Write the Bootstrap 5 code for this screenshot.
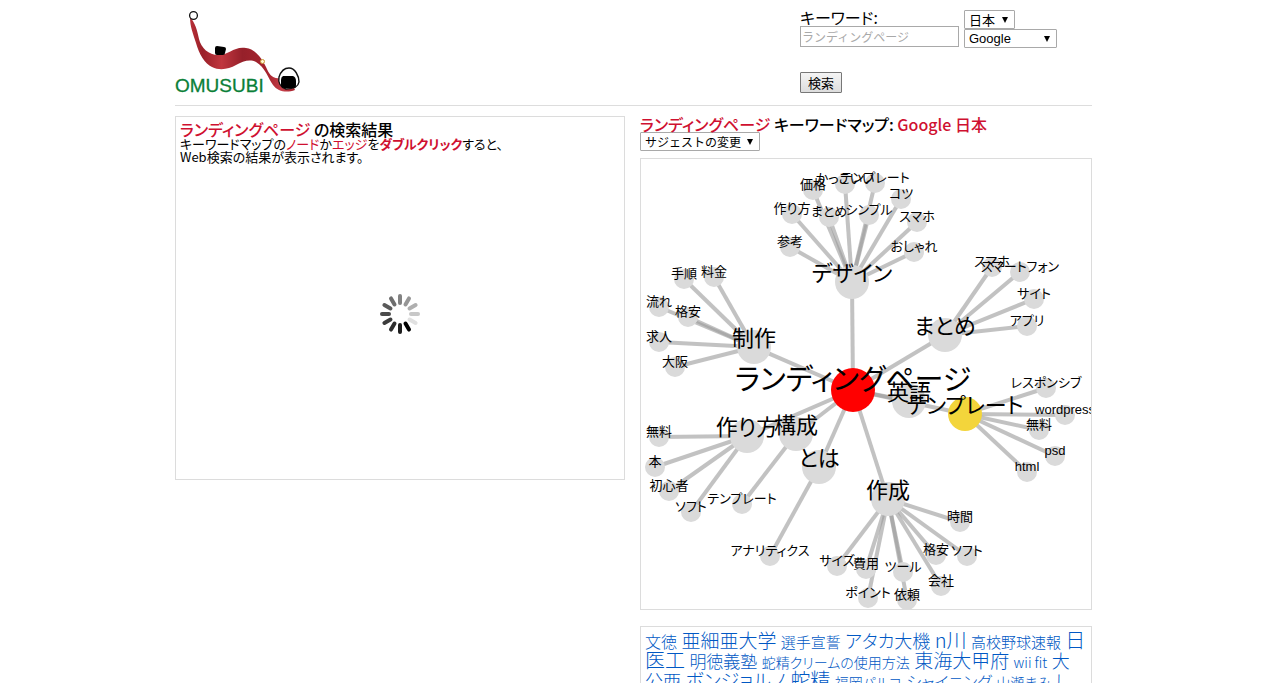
<!DOCTYPE html>
<html lang="ja">
<head>
<meta charset="utf-8">
<meta name="viewport" content="width=device-width, initial-scale=1">
<title>ランディングページ - OMUSUBI</title>
<link href="https://cdn.jsdelivr.net/npm/bootstrap@5.3.0/dist/css/bootstrap.min.css" rel="stylesheet">
<style>
body{font-family:"Noto Sans CJK JP",sans-serif;font-feature-settings:"palt";color:#000;background:#fff;font-size:13px;line-height:13px}
.page{max-width:920px;padding-left:3px}
.topbar{height:105px;padding-top:9px}
.logo{width:130px;height:90px}
.search{width:292px;gap:5px}
.kw-label{font-size:16px;line-height:17px}
.kw-input{width:159px;height:21px;border:1px solid #a9a9a9;padding:0 1px;font-size:12px;line-height:19px}
.kw-input::placeholder{color:#a9a9a9;opacity:1}
.picks{padding-top:1px}
.pick{appearance:none;height:19px;border:1px solid #a9a9a9;border-radius:1px;color:#000;padding:0 4px;font-size:13px;line-height:16px;
 background:#fff url("data:image/svg+xml,%3Csvg xmlns='http://www.w3.org/2000/svg' width='6' height='6'%3E%3Cpath d='M0 0h6L3 6z'/%3E%3C/svg%3E") no-repeat right 6px center}
.pick-area{width:51px}
.pick-engine{width:93px;font-family:"Liberation Sans",sans-serif}
.pick-suggest{width:120px;font-size:12px}
.go{width:42px;height:21px;margin-top:25px;padding:0;border:1px solid #777;border-radius:1px;background:linear-gradient(#f4f4f4,#ddd);color:#000;font-size:13px;line-height:17px}
.rule{border-top:1px solid #ddd}
.cols{display:grid;grid-template-columns:450fr 452fr;gap:15px;padding-top:10px}
.panel{border:1px solid #dcdcdc}
.result{min-height:364px;padding:4px}
.wait{padding-bottom:10px}
.ttl{font-size:16px;line-height:16px;margin:0;font-weight:500;color:#000}
.red{color:#cf1030}
.mapbox{margin-top:7px}
.map{display:block;width:100%;aspect-ratio:1;font-family:"Liberation Sans","Noto Sans CJK JP",sans-serif}
.map text{text-anchor:middle;dominant-baseline:central;fill:#000}
.map line{stroke:#999;stroke-opacity:.6;stroke-width:4}
.cloud{padding:5px 5px 5px 4px;font-size:15px;line-height:20px}
.cloud a{color:#0058c4;text-decoration:none;font-weight:300;line-height:0;margin-right:1px}
.cloud .s14{font-size:14px}.cloud .s16{font-size:16px}.cloud .s17{font-size:17px}.cloud .s18{font-size:18px}.cloud .s19{font-size:19px}.cloud .s20{font-size:20px}
@media(max-width:767px){.cols{grid-template-columns:1fr}}
</style>
</head>
<body>
<div class="page mx-auto">
<header class="topbar d-flex justify-content-between">
 <a href="#" aria-label="OMUSUBI"><svg class="logo" viewBox="175 9 130 90">
  <defs><linearGradient id="cloth" x1="0" x2="1"><stop offset="0" stop-color="#b83038"/><stop offset=".12" stop-color="#9a2029"/><stop offset=".3" stop-color="#c0373f"/><stop offset=".5" stop-color="#96202a"/><stop offset=".75" stop-color="#a8252f"/><stop offset=".88" stop-color="#c5404a"/><stop offset="1" stop-color="#a51f29"/></linearGradient></defs>
  <path d="M190 17C190 27 193 33 196 43C199 54 205 64 212 67C220 71 229 69 236 65C243 61 250 59 256 62C265 67 268 78 273 85C278 92 287 93 295 90L293 86L280 78C272 79 269 74 266 67C262 58 255 49 246 48C234 46 229 55 218 55C209 55 201 48 199 39C197 29 195 23 190 17Z" fill="url(#cloth)"/>
  <circle cx="193.500" cy="15.500" r="3.900" fill="#fff" stroke="#111" stroke-width="1.300"/>
  <path d="M217 46l7 1q2 0 2 2l-1 4q0 2-2 2h-6q-2 0-2-2v-5q0-2 2-2Z"/>
  <circle cx="262.500" cy="61.500" r="2" fill="#fff8d0" stroke="#c99a3a"/>
  <path d="M289 68C295 68 299 76 299 82C298 88 292 89 286 89C280 87 278 82 279 77C281 71 285 68 289 68Z" fill="#fff" stroke="#111" stroke-width="1.400"/>
  <path d="M283 76h10q3 1 3 5v4q0 3-3 3h-9q-3 0-3-3v-5q0-3 2-4Z"/>
  <text x="175" y="92" font-family="Liberation Sans, sans-serif" font-size="19" fill="#0b8038" stroke="#0b8038" stroke-width=".3">OMUSUBI</text>
 </svg></a>
 <form class="search d-flex align-items-start" onsubmit="return false">
  <div class="d-flex flex-column align-items-start">
   <label class="kw-label" for="kw">キーワード:</label>
   <input class="kw-input" id="kw" type="text" placeholder="ランディングページ">
   <button class="go" type="submit">検索</button>
  </div>
  <div class="picks d-flex flex-column align-items-start">
   <select class="pick pick-area" aria-label="地域"><option>日本</option></select>
   <select class="pick pick-engine" aria-label="検索エンジン"><option>Google</option></select>
  </div>
 </form>
</header>
<div class="rule"></div>
<main class="cols align-items-start">
 <section class="panel result d-flex flex-column">
  <h1 class="ttl"><span class="red">ランディングページ</span> の検索結果</h1>
  <p class="m-0">キーワードマップの<span class="red">ノード</span>か<span class="red">エッジ</span>を<b class="red">ダブルクリック</b>すると、<br>Web検索の結果が表示されます。</p>
  <div class="wait flex-grow-1 d-flex justify-content-center align-items-center"><svg id="spin" width="42" height="42" viewBox="-21 -21 42 42" role="img" aria-label="読み込み中"></svg></div>
 </section>
 <section>
  <h2 class="ttl"><span class="red">ランディングページ</span> キーワードマップ: <span class="red">Google 日本</span></h2>
  <select class="pick pick-suggest d-block" aria-label="サジェスト"><option>サジェストの変更</option></select>
  <div class="panel mapbox"><svg id="map" class="map" viewBox="0 0 450 450"></svg></div>
  <div class="panel cloud mt-3">
   <a class="s16" href="#">文徳</a> <a class="s19" href="#">亜細亜大学</a> <a href="#">選手宣誓</a> <a class="s18" href="#">アタカ大機</a> <a class="s20" href="#">n川</a> <a href="#">高校野球速報</a> <a class="s20" href="#">日医工</a> <a class="s17" href="#">明徳義塾</a> <a class="s14" href="#">蛇精クリームの使用方法</a> <a class="s19" href="#">東海大甲府</a> <a class="s14" href="#">wii fit</a> <a class="s18" href="#">大公西</a> <a class="s19" href="#">ボンジョルノ</a> <a class="s20" href="#">蛇精</a> <a class="s14" href="#">福岡パルコ</a> <a class="s16" href="#">シャイニング</a> <a class="s14" href="#">山瀬まみ</a> <a class="s17" href="#">しい</a>
  </div>
 </section>
</main>
</div>
<script src="https://cdn.jsdelivr.net/npm/bootstrap@5.3.0/dist/js/bootstrap.bundle.min.js"></script>
<script>
// Each hub: label, x, y, then its suggestions as [label, x, y].
const root = ['ランディングページ', 212, 231];
const hubs = [
 ['デザイン',211,123,[['かっこいい',204,25],['テンプレート',234,24],['価格',172,31],['コツ',260,40],['作り方',151,55],['まとめ',188,58],['シンプル',228,56],['スマホ',276,63],['おしゃれ',273,93],['参考',149,88]]],
 ['まとめ',304,176,[['スマホ',351,108],['スマートフォン',379,113],['サイト',393,140],['アプリ',386,167]]],
 ['制作',113,188,[['手順',43,120],['料金',73,118],['流れ',18,148],['格安',47,158],['求人',18,183],['大阪',34,208]]],
 ['作り方',106,277,[['無料',18,278],['本',14,308],['初心者',28,332],['ソフト',50,353]]],
 ['構成',155,275,[['テンプレート',101,345]]],
 ['とは',178,308,[['アナリティクス',129,397]]],
 ['作成',247,340,[['サイズ',196,407],['費用',225,410],['ポイント',227,439],['ツール',262,413],['依頼',266,441],['会社',300,427],['格安',295,396],['ソフト',326,397],['時間',319,363]]],
 ['英語',268,242,[]],
 ['テンプレート',324,255,[['レスポンシブ',405,229],['wordpress',424,256],['無料',398,271],['psd',414,297],['html',386,313]]]
];
const NS = 'http://www.w3.org/2000/svg';
function add(parent, tag, attrs, text) {
  const e = document.createElementNS(NS, tag);
  for (const k in attrs) e.setAttribute(k, attrs[k]);
  if (text) e.textContent = text;
  parent.appendChild(e);
}
const map = document.getElementById('map');
const nodes = [];
hubs.forEach(([label, x, y, kids], i) => {
  add(map, 'line', {x1: root[1], y1: root[2], x2: x, y2: y});
  nodes.push([label, x, y, 17, i === 8 ? '#f3d53b' : '#dadada', 22, 9]);
  kids.forEach(k => {
    add(map, 'line', {x1: x, y1: y, x2: k[1], y2: k[2]});
    nodes.push([...k, 10, '#dadada', 13, 6]);
  });
});
nodes.push([...root, 22, '#f00', 29, 10]);
nodes.forEach(n => add(map, 'circle', {cx: n[1], cy: n[2], r: n[3], fill: n[4]}));
nodes.forEach(n => add(map, 'text', {x: n[1], y: n[2] - n[6], 'font-size': n[5]}, n[0]));
// Twelve spokes, darkest at five o'clock, fading clockwise up to four.
const spin = document.getElementById('spin');
for (let i = 0; i < 12; i++) {
  const v = [0,30,45,60,75,90,110,130,150,175,200,225][i];
  add(spin, 'line', {x1: 0, y1: -11, x2: 0, y2: -18, stroke: `rgb(${v},${v},${v})`, 'stroke-width': 4, 'stroke-linecap': 'round', transform: `rotate(${150 + i * 30})`});
}
</script>
</body>
</html>
